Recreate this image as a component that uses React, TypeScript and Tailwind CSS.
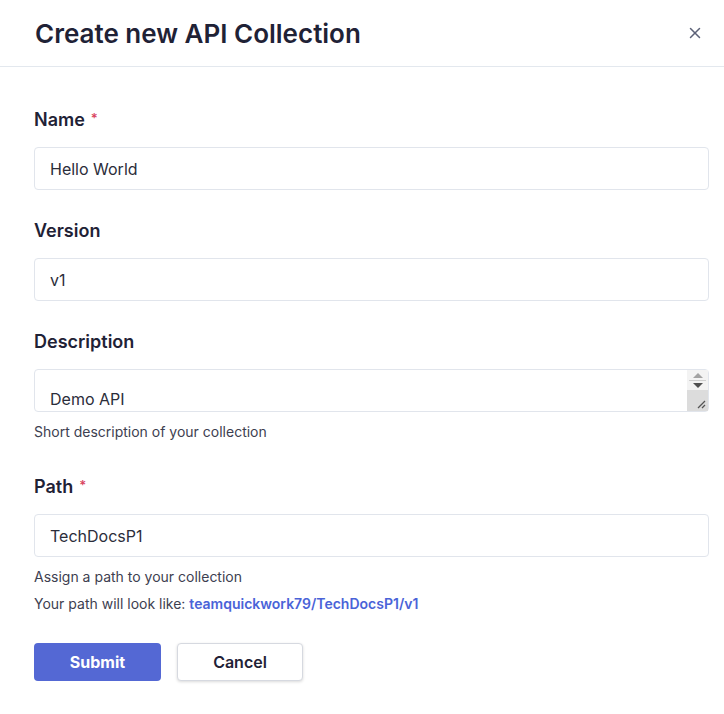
import { X } from 'lucide-react'

function Label({ text, required }: { text: string; required?: boolean }) {
  return (
    <label className="flex items-start text-[18px] font-semibold leading-[24px] text-[#1f2236]">
      {text}
      {required && <span className="ml-[6px] text-[13px] leading-[20px] text-[#d9455f]">*</span>}
    </label>
  )
}

function TextInput({ value }: { value: string }) {
  return (
    <input
      type="text"
      defaultValue={value}
      className="h-[43px] w-full rounded-[4px] border border-[#e1e5ec] bg-white px-[15px] text-[16px] text-[#2b2d3a] outline-none"
    />
  )
}

export default function App() {
  return (
    <div className="min-h-screen bg-white font-['Inter',sans-serif]">
      {/* Header */}
      <div className="flex h-[67px] items-center justify-between border-b border-[#e3e8ee] pl-[35px] pr-[17px]">
        <h1 className="text-[26px] font-semibold text-[#1f2236]">Create new API Collection</h1>
        <button className="flex h-[24px] w-[24px] items-center justify-center text-[#5d6278]">
          <X size={18} strokeWidth={2} />
        </button>
      </div>

      {/* Form */}
      <div className="px-[34px] pr-[15px] pt-[41px]">
        <div className="flex flex-col gap-[15px]">
          <Label text="Name" required />
          <TextInput value="Hello World" />
        </div>

        <div className="mt-[29px] flex flex-col gap-[15px]">
          <Label text="Version" />
          <TextInput value="v1" />
        </div>

        <div className="mt-[29px] flex flex-col gap-[15px]">
          <Label text="Description" />
          <div className="relative">
            <textarea
              defaultValue="Demo API"
              rows={1}
              className="block h-[43px] w-full resize-none overflow-hidden rounded-[4px] border border-[#e1e5ec] bg-white pl-[15px] pr-[30px] pt-[17px] text-[16px] leading-[24px] text-[#2b2d3a] outline-none"
            />
            {/* scrollbar drawn over the textarea */}
            <div className="absolute bottom-[1px] right-[1px] top-[1px] flex w-[21px] flex-col">
              <div className="flex h-[20px] flex-col items-center justify-center gap-[2px] bg-[#f3f3f3]">
                <svg width="10" height="5" viewBox="0 0 10 5"><path d="M0 5 L5 0 L10 5 Z" fill="#a3a3a3" /></svg>
                <div className="h-px w-[17px] bg-[#cfcfcf]" />
                <svg width="10" height="5" viewBox="0 0 10 5"><path d="M0 0 L5 5 L10 0 Z" fill="#505050" /></svg>
              </div>
              <div className="relative flex-1 bg-[#dcdcdc]">
                <svg className="absolute bottom-[2px] right-[2px]" width="10" height="10" viewBox="0 0 10 10">
                  <path d="M9 2 L2 9 M9 6 L6 9" stroke="#555" strokeWidth="1.3" />
                </svg>
              </div>
            </div>
          </div>
        </div>
        <p className="mt-[9px] text-[14px] text-[#3d4050]">Short description of your collection</p>

        <div className="mt-[33px] flex flex-col gap-[15px]">
          <Label text="Path" required />
          <TextInput value="TechDocsP1" />
        </div>
        <p className="mt-[9px] text-[14px] text-[#3d4050]">Assign a path to your collection</p>
        <p className="mt-[6px] text-[14px] text-[#3d4050]">
          Your path will look like:{' '}
          <span className="font-semibold text-[#4a63d8]">teamquickwork79/TechDocsP1/v1</span>
        </p>

        <div className="mt-[29px] flex gap-[16px]">
          <button className="h-[38px] w-[127px] rounded-[4px] bg-[#5468d4] text-[16px] font-bold text-white">
            Submit
          </button>
          <button className="h-[38px] w-[126px] rounded-[4px] border border-[#d6d9e0] bg-white text-[16px] font-semibold text-[#1f2236] shadow-[0_1px_3px_rgba(0,0,0,0.15)]">
            Cancel
          </button>
        </div>
      </div>
    </div>
  )
}
